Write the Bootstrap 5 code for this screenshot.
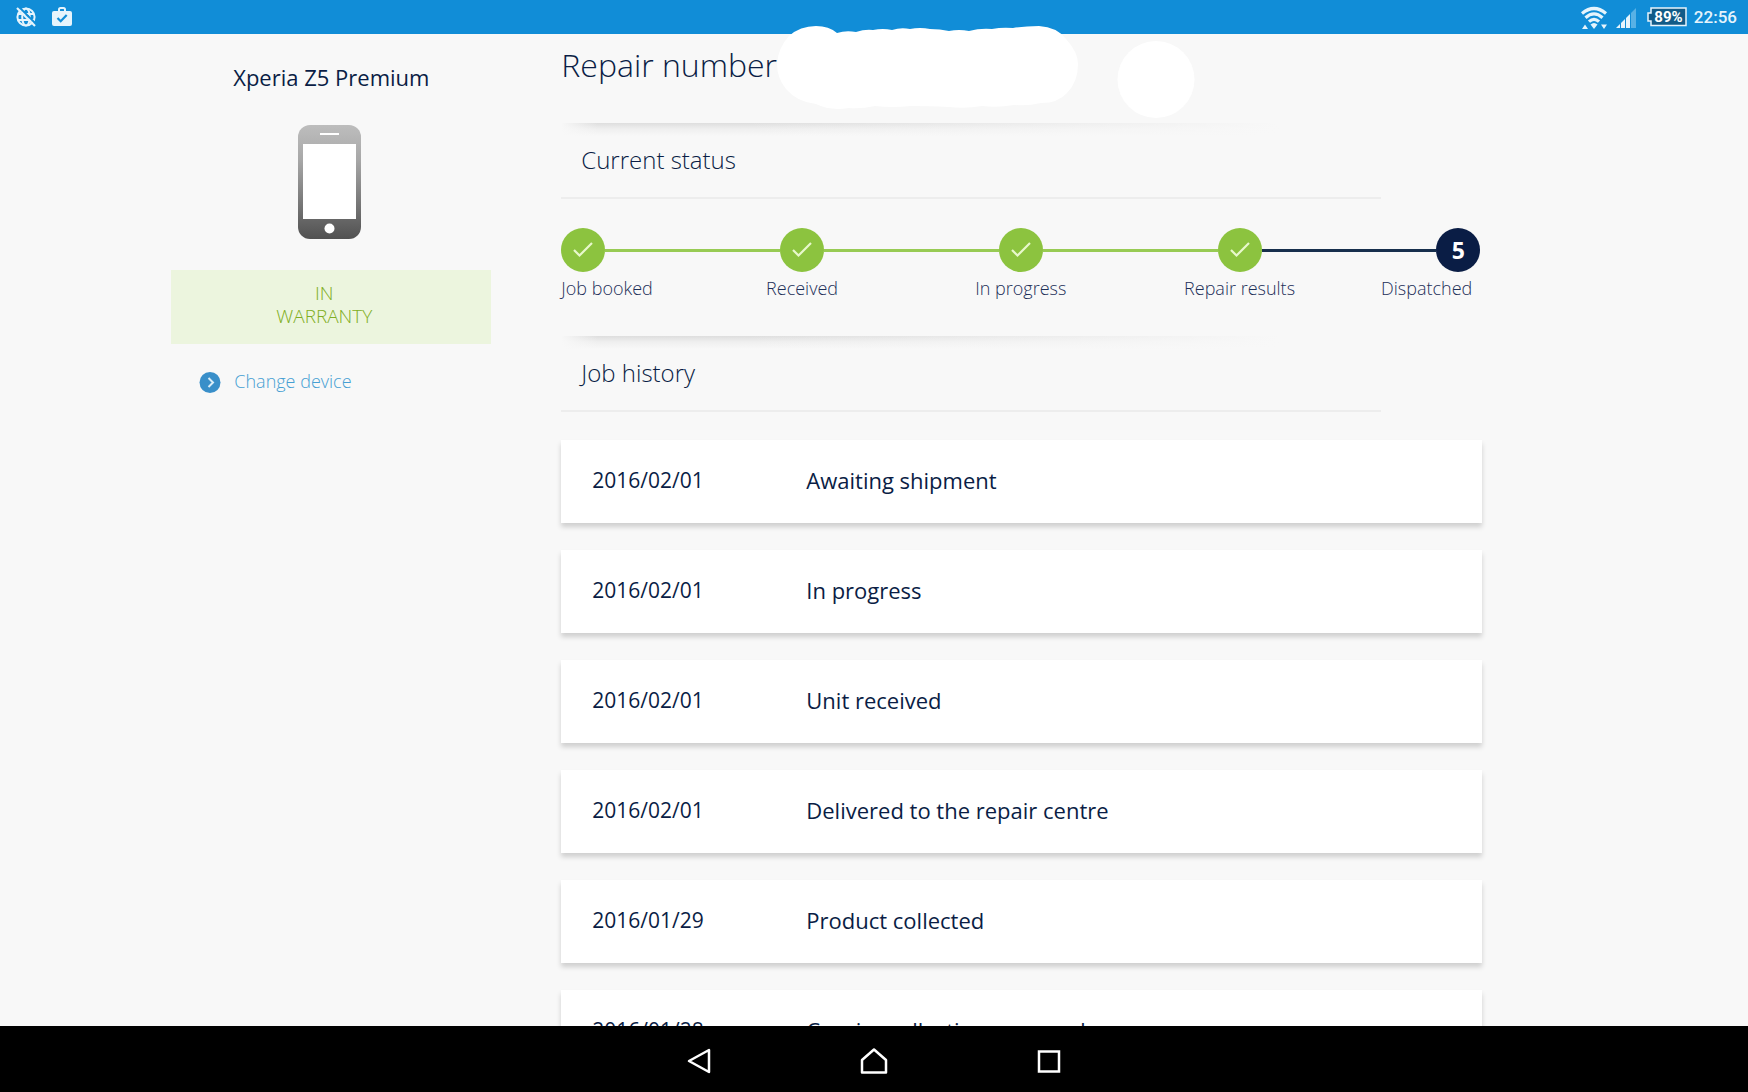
<!DOCTYPE html>
<html lang="en">
<head>
<meta charset="utf-8">
<meta name="viewport" content="width=device-width, initial-scale=1">
<title>Repair status</title>
<link href="https://cdn.jsdelivr.net/npm/bootstrap@5.3.0/dist/css/bootstrap.min.css" rel="stylesheet">
<style>
  :root { --navy: #0a1d45; --leaf: #8cc33f; --thin: 350; }
  body { font-family: "Open Sans", "Noto Sans", sans-serif; color: var(--navy); background: #f8f8f8; }
  .status-bar { height: 34px; padding: 0 11px 0 15px; background: #118dd7; color: #e6f4fc; }
  .status-left { gap: 15px; }
  .clock { font: 500 17px/24px Roboto, sans-serif; margin-left: 6px; }
  .battery-text { font: 700 15px/16px Roboto, sans-serif; fill: #fff; }

  .page-scroll { scrollbar-width: none; min-height: 0; }
  .page-scroll::-webkit-scrollbar { display: none; }
  .page-body { padding: 0 15.2% 0 9.8%; gap: 70px; }

  .device-pane { width: 320px; padding-top: 28px; }
  .device-name { font-size: 22px; line-height: 30px; font-weight: 400; }
  .device-art { margin: 33px auto 31px; }
  .warranty { background: #ecf5de; color: #7fae22; font-size: 19px; line-height: 23px; font-weight: var(--thin); padding: 12px 14px 16px 0; }
  .change-link { color: #469fd3; font-size: 18px; line-height: 24px; font-weight: var(--thin); margin: 25px 0 0 28px; gap: 13px; }

  .page-title { font-size: 32px; line-height: 44px; font-weight: 300; margin: 9px 0 36px; }
  .section-head { background: linear-gradient(90deg, #f8f8f8 0, transparent 4%, transparent 20%, #f8f8f8 78%) 0 0 / 100% 13px no-repeat,
                  linear-gradient(#dedede, #efefef 45%, #f8f8f8) 0 0 / 100% 13px no-repeat; }
  .section-title { font-size: 24px; line-height: 34px; font-weight: var(--thin); padding: 20px 20px; width: 89%; border-bottom: 2px solid #ededed; }

  .steps { margin-top: 29px; padding-right: 2px; }
  .step-dot { width: 44px; height: 44px; background: var(--leaf); flex: none; }
  .step-dot.current { background: var(--navy); color: #fff; font-size: 23px; font-weight: 700; }
  .step-line { height: 3px; background: #98cb54; }
  .step-line.current { background: #172f4d; }
  .step-names { font-size: 18px; line-height: 24px; margin: 4px 0 36px; padding-right: 2px; font-weight: var(--thin); color: #1d2f58; }
  .step-names li { width: 44px; }

  .job-list { margin-top: 28px; gap: 27px; }
  .job-card { height: 83px; border: 0; border-radius: 0; background: #fff; box-shadow: 0 4px 5px rgba(0,0,0,.17); color: var(--navy);
              font-size: 22px; line-height: 30px; padding: 25px 31px; }
  .job-date { width: 214px; flex: none; font-size: 21px; }

  .nav-keys { height: 66px; gap: 135px; padding-top: 4px; background: #000; }
  .nav-keys .btn { width: 40px; height: 40px; }

  .redaction { left: 777px; top: 26px; z-index: 5; }
</style>
</head>
<body class="vh-100 d-flex flex-column overflow-hidden">

<header class="status-bar d-flex align-items-center justify-content-between flex-shrink-0">
  <div class="status-left d-flex align-items-center">
    <svg width="22" height="22" viewBox="0 0 22 22" fill="none" stroke="currentColor" stroke-width="2" aria-label="No connection">
      <circle cx="11" cy="11" r="8.6"/><ellipse cx="11" cy="11" rx="3.8" ry="8.6"/><path d="M3 8h16M3 14h16"/>
      <path d="M3.500 .5l17.500 17.500" stroke="#118dd7" stroke-width="2"/><path d="M2 2l18 18" stroke-width="2.200"/>
    </svg>
    <svg width="20" height="22" viewBox="0 0 20 22" aria-label="Store update">
      <path d="M7 5V3.500Q7 2 8.500 2h3Q13 2 13 3.500V5" fill="none" stroke="currentColor" stroke-width="2"/>
      <rect y="5" width="20" height="15" rx="2" fill="currentColor"/><path d="M5.500 12l3.200 3.200 6-6.200" fill="none" stroke="#118dd7" stroke-width="2.200"/>
    </svg>
  </div>
  <div class="d-flex align-items-center">
    <svg width="108" height="28" viewBox="0 0 108 28" aria-label="Wi-Fi, mobile signal, battery 89 percent">
      <g fill="none" stroke="currentColor" stroke-width="3.200">
        <path d="M2 10.500Q14 .5 26 10.500"/><path d="M5.500 14.700Q14 7 22.500 14.700"/><path d="M9 18.700Q14 14 19 18.700"/>
      </g>
      <path d="M10.500 21.500Q14 18.500 17.500 21.500L14 26z" fill="currentColor"/>
      <path d="M2 26l3-4.500 3 4.500zM21 21.500h6L24 26z" fill="currentColor"/>
      <path d="M36 25l4-4v4zM41 20l4-4v9h-4zM46 15l4-4v14h-4z" fill="currentColor"/><path d="M51 10l5-5v20h-5z" fill="#58b1e5"/>
      <path d="M71 5h35v17.500H71V18h-3v-8h3z" fill="#125b87" stroke="currentColor" stroke-width="1.500"/>
      <text class="battery-text" x="88.500" y="19" text-anchor="middle">89%</text>
    </svg>
    <time class="clock" datetime="22:56">22:56</time>
  </div>
</header>

<main class="page-scroll flex-grow-1 overflow-auto">
  <div class="page-body d-flex align-items-start">
    <aside class="device-pane flex-shrink-0">
      <h2 class="device-name text-center m-0">Xperia Z5 Premium</h2>
      <svg class="device-art d-block" width="66" height="114" viewBox="0 0 66 114" role="img" aria-label="Phone">
        <defs><linearGradient id="shell" x1="0" y1="0" x2="0" y2="1"><stop offset="0" stop-color="#bdbdbd"/><stop offset=".3" stop-color="#a8a8a8"/><stop offset="1" stop-color="#515151"/></linearGradient></defs>
        <rect width="63" height="114" rx="12" fill="url(#shell)"/>
        <rect x="5" y="19" width="53" height="75" fill="#fff"/><rect x="22" y="8" width="19" height="2" fill="#fff"/><circle cx="31.500" cy="103.500" r="5" fill="#fff"/>
      </svg>
      <div class="warranty text-center">IN<br>WARRANTY</div>
      <a href="#" class="change-link d-inline-flex align-items-center text-decoration-none">
        <svg width="22" height="24" viewBox="0 0 22 24" aria-hidden="true"><circle cx="11" cy="13.500" r="10.500" fill="#398fc9"/><path d="M9.500 9L14 13.500 9.500 18" fill="none" stroke="#d9edf8" stroke-width="2"/></svg>
        Change device
      </a>
    </aside>

    <section class="flex-grow-1">
      <h1 class="page-title">Repair number</h1>

      <div class="section-head"><h2 class="section-title m-0">Current status</h2></div>
      <div class="steps d-flex align-items-center">
        <span class="step-dot rounded-circle d-flex"><svg class="m-auto" width="22" height="18" viewBox="0 0 22 18" fill="none" stroke="#e8f8cc" stroke-width="2.200"><path d="M2 9l5.500 5.500L20 2"/></svg></span>
        <span class="step-line flex-grow-1"></span>
        <span class="step-dot rounded-circle d-flex"><svg class="m-auto" width="22" height="18" viewBox="0 0 22 18" fill="none" stroke="#e8f8cc" stroke-width="2.200"><path d="M2 9l5.500 5.500L20 2"/></svg></span>
        <span class="step-line flex-grow-1"></span>
        <span class="step-dot rounded-circle d-flex"><svg class="m-auto" width="22" height="18" viewBox="0 0 22 18" fill="none" stroke="#e8f8cc" stroke-width="2.200"><path d="M2 9l5.500 5.500L20 2"/></svg></span>
        <span class="step-line flex-grow-1"></span>
        <span class="step-dot rounded-circle d-flex"><svg class="m-auto" width="22" height="18" viewBox="0 0 22 18" fill="none" stroke="#e8f8cc" stroke-width="2.200"><path d="M2 9l5.500 5.500L20 2"/></svg></span>
        <span class="step-line current flex-grow-1"></span>
        <span class="step-dot current rounded-circle d-flex align-items-center justify-content-center">5</span>
      </div>
      <ul class="step-names list-unstyled d-flex justify-content-between text-nowrap">
        <li class="d-flex">Job booked</li>
        <li class="d-flex justify-content-center">Received</li>
        <li class="d-flex justify-content-center">In progress</li>
        <li class="d-flex justify-content-center">Repair results</li>
        <li class="d-flex justify-content-end pe-2">Dispatched</li>
      </ul>

      <div class="section-head"><h2 class="section-title m-0">Job history</h2></div>
      <ul class="job-list list-unstyled d-flex flex-column">
        <li class="job-card d-flex"><time class="job-date">2016/02/01</time><span>Awaiting shipment</span></li>
        <li class="job-card d-flex"><time class="job-date">2016/02/01</time><span>In progress</span></li>
        <li class="job-card d-flex"><time class="job-date">2016/02/01</time><span>Unit received</span></li>
        <li class="job-card d-flex"><time class="job-date">2016/02/01</time><span>Delivered to the repair centre</span></li>
        <li class="job-card d-flex"><time class="job-date">2016/01/29</time><span>Product collected</span></li>
        <li class="job-card d-flex"><time class="job-date">2016/01/28</time><span>Courier collection arranged</span></li>
      </ul>
    </section>
  </div>
</main>

<nav class="nav-keys d-flex align-items-center justify-content-center flex-shrink-0" aria-label="System">
  <button type="button" class="btn p-0 border-0" aria-label="Back"><svg width="30" height="30" viewBox="0 0 30 30" fill="none" stroke="#fff" stroke-width="2.500"><path d="M25 4v22L5 15z" stroke-linejoin="round"/></svg></button>
  <button type="button" class="btn p-0 border-0" aria-label="Home"><svg width="30" height="30" viewBox="0 0 30 30" fill="none" stroke="#fff" stroke-width="2.500"><path d="M15 3.500L27 14v12.500H3V14z" stroke-linejoin="round"/></svg></button>
  <button type="button" class="btn p-0 border-0" aria-label="Recent apps"><svg width="30" height="30" viewBox="0 0 30 30" fill="none" stroke="#fff" stroke-width="2.500"><rect x="5" y="5.500" width="20" height="20"/></svg></button>
</nav>

<!-- White marker strokes hiding the repair number -->
<svg class="redaction position-absolute pe-none" width="420" height="96" viewBox="0 0 420 96" fill="#fff" aria-hidden="true">
  <path d="M39 0Q52 0 60 7Q69 4 79 6Q88 3 96 4Q106 2 115 4Q124 1 133 3Q143 1 153 3Q163 3 172 5Q182 3 192 5Q203 2 215 3Q225 1 236 2Q248 0 262 0Q280 1 289 13Q301 26 301 38Q301 56 290 67Q281 77 264 77Q251 80 237 79Q221 82 205 80Q188 83 172 81Q151 80 134 80Q115 82 98 80Q84 83 72 82Q53 85 39 78Q20 76 9 63Q0 52 0 38Q1 22 12 10Q23 0 39 0z"/>
  <circle cx="379" cy="53.500" r="38.500"/>
</svg>

<script src="https://cdn.jsdelivr.net/npm/bootstrap@5.3.0/dist/js/bootstrap.bundle.min.js"></script>
</body>
</html>
